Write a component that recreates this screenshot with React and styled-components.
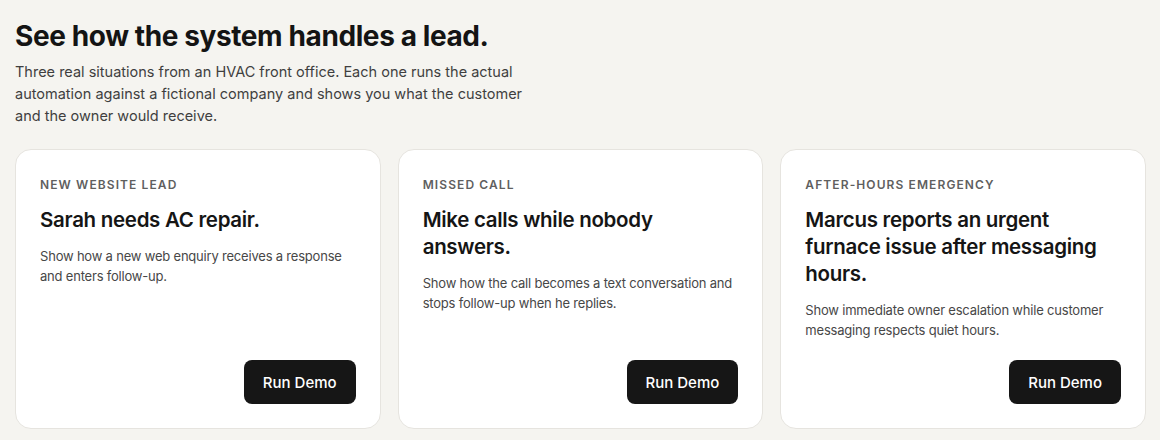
import React from "react";
import styled, { createGlobalStyle } from "styled-components";

const Global = createGlobalStyle`
  html, body { margin: 0; padding: 0; background: #f5f4f0; }
  body { font-family: Inter, "Noto Sans", sans-serif; color: #151515; -webkit-font-smoothing: antialiased; }
  * { box-sizing: border-box; }
`;

const Page = styled.main`
  padding: 19px 14px 12px 15px;
`;

const Heading = styled.h1`
  margin: 0;
  font-size: 28px;
  line-height: 34px;
  font-weight: 700;
  letter-spacing: -0.4px;
  color: #141414;
`;

const Lead = styled.p`
  margin: 8px 0 0;
  max-width: 530px;
  font-size: 14.5px;
  line-height: 22px;
  color: #3f3f3f;
`;

const Grid = styled.div`
  margin-top: 22px;
  display: grid;
  grid-template-columns: repeat(3, 1fr);
  gap: 17px;
`;

const Card = styled.article`
  display: flex;
  flex-direction: column;
  min-height: 279px;
  padding: 26px 24px 24px;
  background: #fff;
  border: 1px solid #e6e4df;
  border-radius: 16px;
`;

const Label = styled.div`
  font-size: 12px;
  line-height: 18px;
  font-weight: 600;
  letter-spacing: 1.1px;
  text-transform: uppercase;
  color: #5f5f5f;
`;

const Title = styled.h2`
  margin: 12px 0 0;
  font-size: 20.5px;
  line-height: 27px;
  font-weight: 600;
  letter-spacing: -0.3px;
  color: #151515;
`;

const Desc = styled.p`
  margin: 13px 0 0;
  font-size: 13px;
  line-height: 20px;
  letter-spacing: -0.2px;
  color: #474747;
`;

const Button = styled.button`
  margin-top: auto;
  align-self: flex-end;
  height: 44px;
  padding: 0 19px;
  border: none;
  border-radius: 8px;
  background: #161616;
  color: #fff;
  font-family: Inter, "Noto Sans", sans-serif;
  font-size: 15px;
  font-weight: 500;
  cursor: pointer;
`;

const Spacer = styled.div`
  height: 20px;
  flex: 0 0 auto;
`;

const demos = [
  {
    label: "New website lead",
    title: "Sarah needs AC repair.",
    desc: "Show how a new web enquiry receives a response and enters follow-up.",
  },
  {
    label: "Missed call",
    title: "Mike calls while nobody answers.",
    desc: "Show how the call becomes a text conversation and stops follow-up when he replies.",
  },
  {
    label: "After-hours emergency",
    title: "Marcus reports an urgent furnace issue after messaging hours.",
    desc: "Show immediate owner escalation while customer messaging respects quiet hours.",
  },
];

export default function App() {
  return (
    <>
      <Global />
      <Page>
        <Heading>See how the system handles a lead.</Heading>
        <Lead>
          Three real situations from an HVAC front office. Each one runs the actual
          automation against a fictional company and shows you what the customer
          and the owner would receive.
        </Lead>
        <Grid>
          {demos.map((d) => (
            <Card key={d.label}>
              <Label>{d.label}</Label>
              <Title>{d.title}</Title>
              <Desc>{d.desc}</Desc>
              <Spacer />
              <Button>Run Demo</Button>
            </Card>
          ))}
        </Grid>
      </Page>
    </>
  );
}
